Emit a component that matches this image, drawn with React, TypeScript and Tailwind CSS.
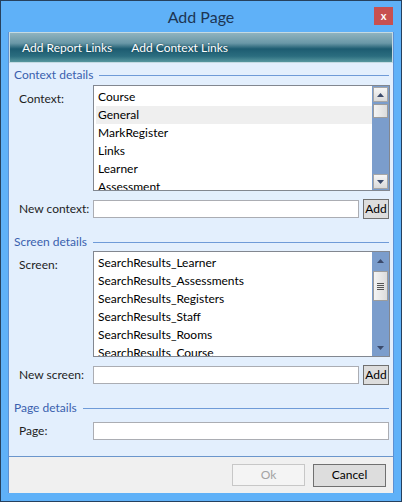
import React from "react";

const font = { fontFamily: 'Lato, "Noto Sans", "Liberation Sans", sans-serif' };

const contexts = ["Course", "General", "MarkRegister", "Links", "Learner", "Assessment"];
const screens = [
  "SearchResults_Learner",
  "SearchResults_Assessments",
  "SearchResults_Registers",
  "SearchResults_Staff",
  "SearchResults_Rooms",
  "SearchResults_Course",
];

function Arrow({ down }: { down?: boolean }) {
  return (
    <svg width="7" height="4" viewBox="0 0 7 4">
      {down ? <polygon points="0,0 7,0 3.5,4" fill="#3b4a6b" /> : <polygon points="0,4 7,4 3.5,0" fill="#3b4a6b" />}
    </svg>
  );
}

function ScrollBar({ hot, thumbTop, thumbHeight, grip }: { hot?: boolean; thumbTop: number; thumbHeight: number; grip?: boolean }) {
  const btn = hot
    ? "border border-[#a6a6a6] bg-gradient-to-b from-[#f6f6f6] to-[#dadada]"
    : "";
  return (
    <div className="w-[17px] h-full bg-[#7b9dcc] flex flex-col items-center py-px">
      <div className={`w-[15px] h-[15px] flex items-center justify-center ${btn}`}>
        <Arrow />
      </div>
      <div className="w-[15px] flex-1 flex flex-col">
        <div style={{ height: thumbTop }} />
        <div
          className="w-[15px] border border-[#9c9c9c] bg-gradient-to-r from-[#f4f4f4] to-[#dcdcdc] flex flex-col items-center justify-center gap-px"
          style={{ height: thumbHeight }}
        >
          {grip && (
            <>
              <div className="w-[7px] h-px bg-[#555]" />
              <div className="w-[7px] h-px bg-[#555]" />
              <div className="w-[7px] h-px bg-[#555]" />
              <div className="w-[7px] h-px bg-[#555]" />
            </>
          )}
        </div>
      </div>
      <div className={`w-[15px] h-[15px] flex items-center justify-center ${btn}`}>
        <Arrow down />
      </div>
    </div>
  );
}

function ListBox({ items, hover, children }: { items: string[]; hover?: number; children: React.ReactNode }) {
  return (
    <div className="w-[297px] h-[106px] border border-[#828790] bg-white flex overflow-hidden">
      <div className="flex-1 overflow-hidden pt-[2px] pl-[2px]">
        {items.map((it, i) => (
          <div
            key={it}
            className={`h-[18px] leading-[18px] pl-[2px] text-[12px] text-black whitespace-nowrap ${i === hover ? "bg-[#efefef]" : ""}`}
          >
            {it}
          </div>
        ))}
      </div>
      {children}
    </div>
  );
}

function Header({ label }: { label: string }) {
  return (
    <div className="flex items-center h-[14px] pl-[5px] pr-[4px]">
      <span className="text-[12px] leading-[14px] text-[#3a5fae]">{label}</span>
      <div className="flex-1 h-px bg-[#6f9bd8] ml-[6px]" />
    </div>
  );
}

function Field({ label, add }: { label: string; add?: boolean }) {
  return (
    <div className="flex items-center h-[20px] pl-[10px] pr-[4px]">
      <span className="w-[74px] text-[12px] text-[#1e1e1e]">{label}</span>
      <div className="flex-1 h-[18px] bg-white border border-[#abadb3]" />
      {add && (
        <div className="ml-[4px] w-[26px] h-[20px] border border-[#707070] bg-[#dddddd] flex items-center justify-center text-[12px] text-black">
          Add
        </div>
      )}
    </div>
  );
}

export default function App() {
  return (
    <div style={font} className="w-[402px] h-[502px] bg-[#5fb1f8] border border-[#26415e] flex flex-col px-[7px] pb-[8px]">
      {/* title bar */}
      <div className="h-[31px] flex items-center">
        <div className="w-[20px]" />
        <div className="flex-1 text-center text-[16px] text-[#1d3553]">Add Page</div>
        <div className="w-[19px] h-[18px] mr-px mb-[2px] bg-[#c75050] flex items-center justify-center text-white text-[11px] font-bold leading-none">
          x
        </div>
      </div>

      <div className="flex-1 flex flex-col border-x border-[#5d90d2]">
        {/* toolbar */}
        <div className="h-[31px] border border-[#c5dbe3] bg-[linear-gradient(to_bottom,#8fb3bf_0%,#6a98a7_35%,#1d5c71_55%,#2b6d7f_80%,#58979f_100%)] flex items-center gap-[19px] pl-[12px] pt-px text-[12px] text-white [text-shadow:0_0_2px_#1a4050]">
          <span>Add Report Links</span>
          <span>Add Context Links</span>
        </div>

        {/* content */}
        <div className="flex-1 bg-[#e3effd] flex flex-col pt-[5px]">
          <Header label="Context details" />
          <div className="flex mt-[3px] pl-[10px]">
            <span className="w-[74px] text-[12px] text-[#1e1e1e] pt-[5px]">Context:</span>
            <ListBox items={contexts} hover={1}>
              <ScrollBar hot thumbTop={2} thumbHeight={14} />
            </ListBox>
          </div>
          <div className="mt-[8px]">
            <Field label="New context:" add />
          </div>

          <div className="mt-[16px]">
            <Header label="Screen details" />
          </div>
          <div className="flex mt-[2px] pl-[10px]">
            <span className="w-[74px] text-[12px] text-[#1e1e1e] pt-[5px]">Screen:</span>
            <ListBox items={screens}>
              <ScrollBar thumbTop={3} thumbHeight={30} grip />
            </ListBox>
          </div>
          <div className="mt-[8px]">
            <Field label="New screen:" add />
          </div>

          <div className="mt-[16px]">
            <Header label="Page details" />
          </div>
          <div className="mt-[6px]">
            <Field label="Page:" />
          </div>
        </div>

        {/* footer */}
        <div className="h-[37px] border-t border-[#6b96cc] bg-[#f0f0f0] flex items-center justify-end gap-[8px] pr-[7px]">
          <div className="w-[73px] h-[22px] border border-[#c7c7c7] bg-[#f4f4f4] flex items-center justify-center text-[12px] text-[#a3a3a3]">
            Ok
          </div>
          <div className="w-[73px] h-[23px] border border-[#707070] bg-[#dddddd] flex items-center justify-center text-[12px] text-black">
            Cancel
          </div>
        </div>
      </div>
    </div>
  );
}
